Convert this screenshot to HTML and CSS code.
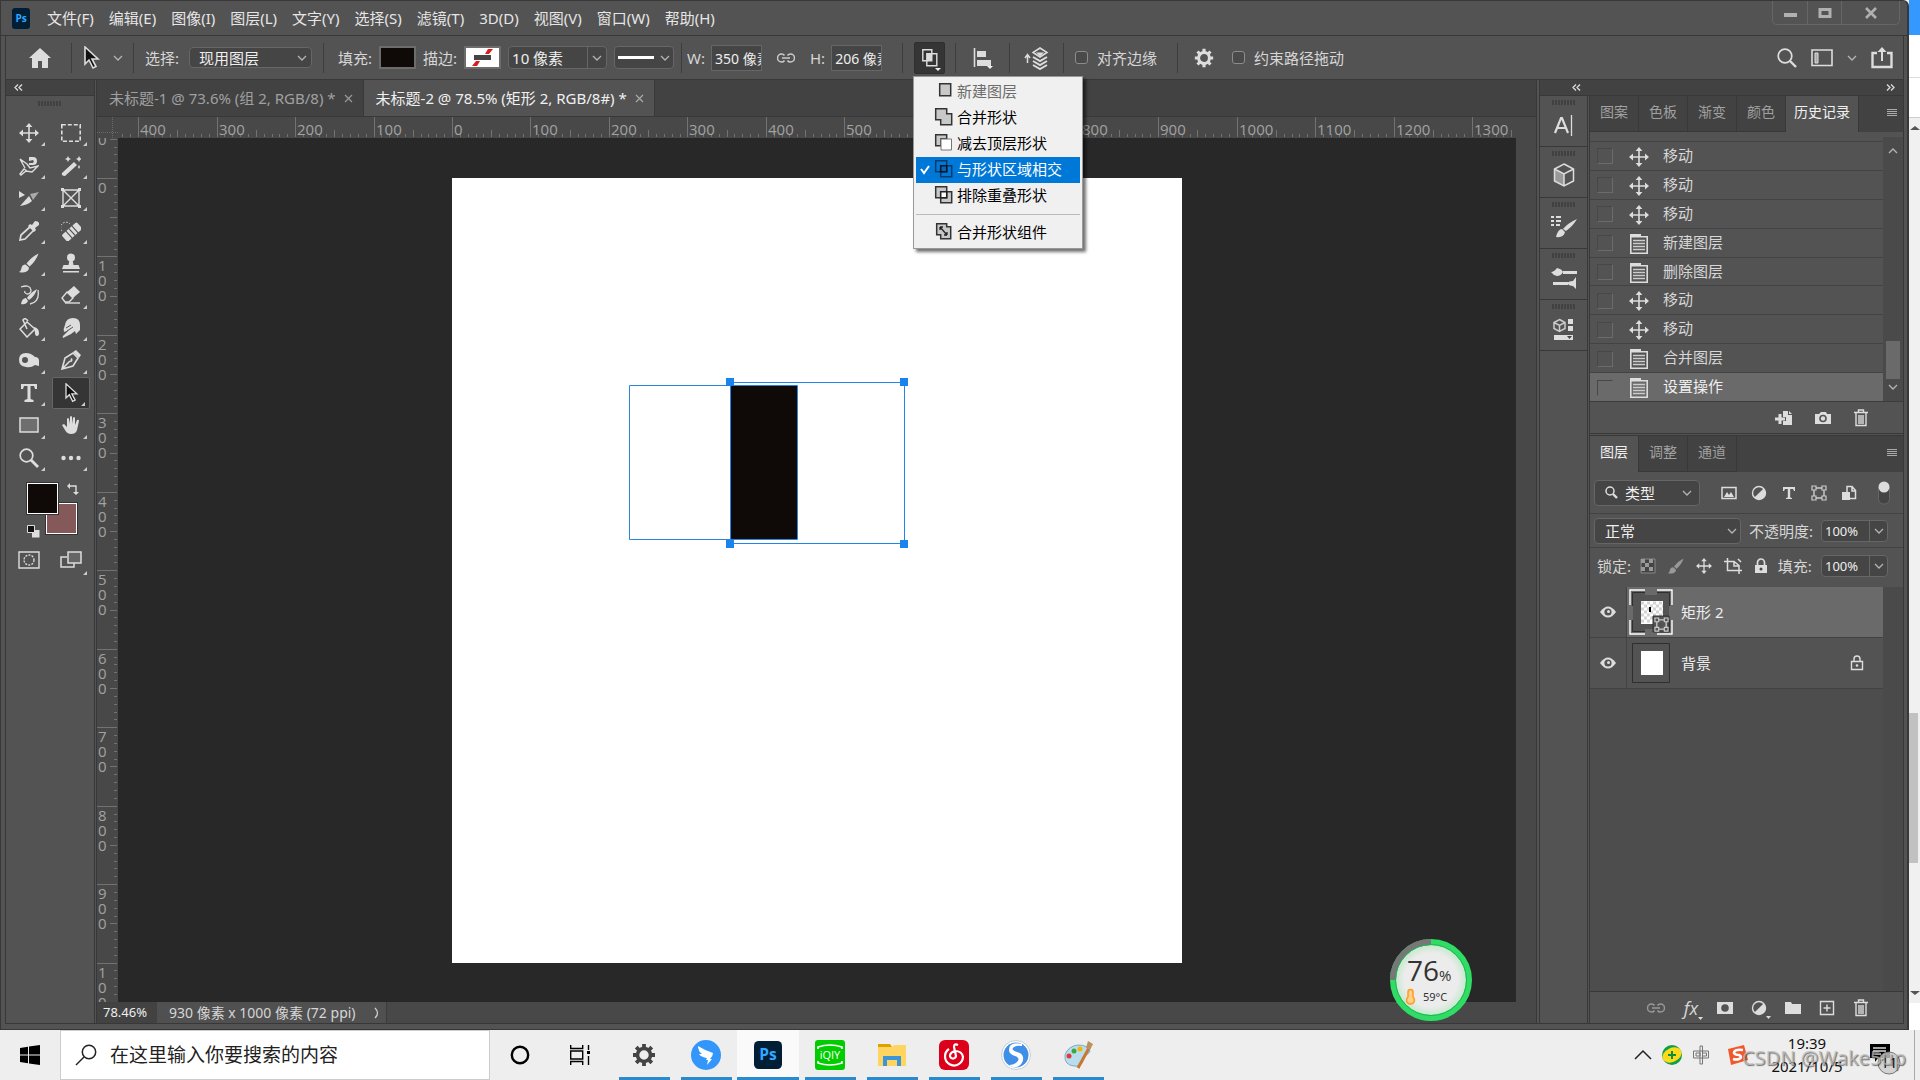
FILE: index.html
```html
<!DOCTYPE html>
<html lang="zh-CN">
<head>
<meta charset="utf-8">
<title>未标题-2 @ 78.5% (矩形 2, RGB/8#)</title>
<link rel="stylesheet" href="styles.css">
</head>
<body>
<svg class="defs" aria-hidden="true">
  <defs>
    <symbol id="chev" viewBox="0 0 10 10"><path d="M1 3l4 4 4-4" fill="none" stroke="#b4b4b4" stroke-width="1.3"/></symbol>
    <symbol id="move" viewBox="0 0 20 20"><path d="M10 3v14M3 10h14" stroke="#ddd" stroke-width="1.6"/><path d="M10 0l3.4 4H6.600zM10 20l3.400-4H6.600zM0 10l4-3.400v6.800zM20 10l-4-3.400v6.800z" fill="#ddd"/></symbol>
    <symbol id="doc" viewBox="0 0 20 20"><path d="M1 0h11v3H1z" fill="#ddd"/><path d="M1.800 2.800h16.400v16.400H1.800z" fill="none" stroke="#ddd" stroke-width="1.600"/><path d="M4 6.500h12M4 9.500h12M4 12.500h12M4 15.500h12" stroke="#ccc" stroke-width="1.300"/></symbol>
    <symbol id="trash" viewBox="0 0 16 18"><path d="M1 3.500h14M5.500 3V1h5v2M3 4v12.500h10V4M6 6v9M8 6v9M10 6v9" fill="none" stroke="#ddd" stroke-width="1.400"/></symbol>
    <symbol id="eye" viewBox="0 0 16 12"><path d="M0 6q8-11 16 0q-8 11-16 0z" fill="#ddd"/><circle cx="8" cy="6" r="3.600" fill="#535353"/><circle cx="8.500" cy="5.500" r="1.500" fill="#ddd"/></symbol>
    <symbol id="shape" viewBox="0 0 16 16"><path d="M3 3h10v10H3z" fill="none" stroke="#ccc" stroke-width="1.400"/><path d="M1 1h4v4H1zM11 1h4v4h-4zM1 11h4v4H1zM11 11h4v4h-4z" fill="#535353" stroke="#ccc" stroke-width="1.200"/></symbol>
    <symbol id="half" viewBox="0 0 16 16"><circle cx="8" cy="8" r="6.500" fill="#535353" stroke="#ddd" stroke-width="1.400"/><path d="M12.600 3.400A6.500 6.500 0 0 1 3.400 12.600z" fill="#ddd"/></symbol>
    <symbol id="gear" viewBox="0 0 24 24"><circle cx="12" cy="12" r="6.500" fill="none" stroke="currentColor" stroke-width="3.600"/><path d="M12 1v4M12 19v4M1 12h4M19 12h4M4.200 4.200l3 3M16.800 16.800l3 3M4.200 19.800l3-3M16.800 7.200l3-3" stroke="currentColor" stroke-width="3.800"/></symbol>
    <symbol id="burger" viewBox="0 0 10 8"><path d="M0 .5h10M0 2.500h10M0 4.500h10M0 6.500h10" stroke="#aaa"/></symbol>
    <symbol id="link" viewBox="0 0 18 10"><path d="M7.500 2.500Q6.500 1 4.500 1a4 4 0 0 0 0 8q2 0 3-1.500M10.500 2.500Q11.500 1 13.500 1a4 4 0 0 1 0 8q-2 0-3-1.500M5 5h8" fill="none" stroke="currentColor" stroke-width="1.500"/></symbol>
    <symbol id="pointer" viewBox="0 0 20 24"><path d="M4 1v17l4-4 4 8 3-1.500-4-7.500h6z" fill="#111" stroke="#ddd" stroke-width="1.600"/></symbol>
    <symbol id="brush" viewBox="0 0 20 20"><path d="M19.500.500Q13 3.500 7.500 10.500l3 3Q17 8 19.500.500zM6.500 11.500q-3.500 0-4 3.500-.500 3-2.500 4 6 1.500 9-1.500 1.500-2 .500-3.500z" fill="currentColor"/></symbol>
    <symbol id="grip" viewBox="0 0 24 5"><path d="M1 0v5M4 0v5M7 0v5M10 0v5M13 0v5M16 0v5M19 0v5M22 0v5" stroke="#3c3c3c" stroke-width="1.500"/></symbol>
  </defs>
</svg>

<main class="window">
  <header class="titlebar">
    <svg class="ps-logo" viewBox="0 0 18 21"><rect width="18" height="21" rx="3" fill="#001e36"/><text x="9" y="14" text-anchor="middle" class="ps-text">Ps</text></svg>
    <nav class="menus">
      <a href="#">文件(F)</a><a href="#">编辑(E)</a><a href="#">图像(I)</a><a href="#">图层(L)</a><a href="#">文字(Y)</a><a href="#">选择(S)</a><a href="#">滤镜(T)</a><a href="#">3D(D)</a><a href="#">视图(V)</a><a href="#">窗口(W)</a><a href="#">帮助(H)</a>
    </nav>
    <div class="win-controls">
      <button aria-label="最小化"><svg width="14" height="12"><path d="M1 6h13v4H1z" fill="#b0b0b0"/></svg></button>
      <button aria-label="最大化"><svg width="14" height="12"><path d="M2 2.500h10v7H2z" fill="none" stroke="#b0b0b0" stroke-width="3"/></svg></button>
      <button class="close" aria-label="关闭"><svg width="14" height="12"><path d="M2 1l10 10M12 1L2 11" stroke="#b0b0b0" stroke-width="2.600"/></svg></button>
    </div>
  </header>

  <section class="options">
    <div class="og og-home"><button class="ic" aria-label="主页"><svg width="22" height="20"><path d="M11 0l11 10h-3v10h-6v-7H9v7H3V10H0z" fill="#ddd"/></svg></button></div>
    <div class="og og-tool"><svg width="20" height="24"><use href="#pointer"/></svg><svg width="10" height="10"><use href="#chev"/></svg></div>
    <div class="og og-select"><label for="sel">选择:</label><span class="drop sel-layer"><select id="sel"><option>现用图层</option></select><svg width="10" height="10"><use href="#chev"/></svg></span></div>
    <div class="og og-fill">
      <span>填充:</span><button class="swatch black" aria-label="填充颜色"></button>
      <span>描边:</span><button class="swatch none" aria-label="描边颜色"><svg width="33" height="19"><path d="M6 18h5l3-5h-4zM19 6h4l4-5h-5z" fill="#d81e1e"/><path d="M8 7h17v5H8z" fill="#444"/></svg></button>
      <span class="drop width-field"><input aria-label="描边宽度" value="10 像素"><i></i><svg width="10" height="10"><use href="#chev"/></svg></span>
      <button class="drop line-style" aria-label="描边样式"><b></b><svg width="10" height="10"><use href="#chev"/></svg></button>
    </div>
    <div class="og og-size">
      <label for="w">W:</label><input id="w" class="num" value="350 像素">
      <svg class="lk" width="18" height="10"><use href="#link"/></svg>
      <label for="h">H:</label><input id="h" class="num" value="206 像素">
    </div>
    <div class="og og-op"><button class="ic pressed" aria-label="路径操作"><svg width="24" height="26"><path d="M4.800 4.800h9v11h-9z" fill="none" stroke="#ddd" stroke-width="1.400"/><path d="M8.800 8.800h10v12h-10z" fill="none" stroke="#ddd" stroke-width="1.400"/><path d="M9 9h5v7H9z" fill="#ddd"/><path d="M17 23h6l-3 3z" fill="#eee"/></svg></button></div>
    <div class="og og-align"><svg width="20" height="22"><path d="M1.500 1v19" stroke="#ddd" stroke-width="1.600"/><path d="M4 4h9v6H4zM4 13h14v6H4z" fill="#ddd"/><path d="M14 19h6l-3 3z" fill="#eee"/></svg></div>
    <div class="og og-arr"><svg width="26" height="24"><path d="M16 2l7 4.500-7 4.500-7-4.500z" fill="#535353" stroke="#ddd" stroke-width="1.500"/><path d="M12 6.500h8l-4 4z" fill="#ddd"/><path d="M9 11l7 4 7-4M9 15l7 4 7-4M9 19l7 4 7-4" fill="none" stroke="#ddd" stroke-width="2"/><path d="M3.500 17V9M1 12l2.500-3.500L6 12" fill="none" stroke="#ddd" stroke-width="1.500"/></svg></div>
    <div class="og og-edge"><input type="checkbox" id="edge"><label for="edge">对齐边缘</label></div>
    <div class="og og-last"><svg class="gear" width="20" height="20"><use href="#gear"/></svg><input type="checkbox" id="cons"><label for="cons">约束路径拖动</label></div>
    <div class="og og-right">
      <svg width="20" height="20"><circle cx="8" cy="8" r="6.800" fill="none" stroke="#ddd" stroke-width="1.700"/><path d="M13 13l6 6" stroke="#ddd" stroke-width="2.400"/></svg>
      <svg width="22" height="18"><path d="M1 1h20v15.500H1z" fill="none" stroke="#ddd" stroke-width="1.600"/><path d="M4 4h3v10H4z" fill="#aaa" stroke="#ddd"/></svg>
      <svg width="10" height="10"><use href="#chev"/></svg>
      <svg width="22" height="22"><path d="M6 6H1.500v14h19V6H16" fill="none" stroke="#ddd" stroke-width="2.400"/><path d="M11 14V3" stroke="#ddd" stroke-width="2"/><path d="M11 0l4.500 5h-9z" fill="#ddd"/></svg>
    </div>
  </section>

  <div class="workspace">
    <aside class="toolbox">
      <div class="dock-head"><svg width="9" height="7"><path d="M4 .5l-3 3 3 3M8 .5l-3 3 3 3" fill="none" stroke="#ddd" stroke-width="1.300"/></svg></div>
      <div class="grip-row"><svg width="24" height="5"><use href="#grip"/></svg></div>
      <div class="tools">
        <button aria-label="移动工具"><svg><use href="#move"/></svg></button>
        <button aria-label="矩形选框"><svg viewBox="0 0 20 20"><path d="M.800 1.800h18.400v16.400H.800z" fill="none" stroke="#ddd" stroke-width="1.600" stroke-dasharray="4 2"/></svg></button>
        <button aria-label="磁性套索"><svg viewBox="0 0 20 20"><path d="M1 3l7 5 3 4 8-2-6 6-6-1-5 4-1-1 4-5 3 2M1 3l5 9" fill="none" stroke="#ddd" stroke-width="1.400"/><path d="M10 5V1h4a4 4 0 0 1 0 8h-4V7h4a2 2 0 0 0 0-3z" fill="#ddd"/></svg></button>
        <button aria-label="魔棒"><svg viewBox="0 0 20 20"><path d="M1 17L13 6l3 3L4 20q-4 0-3-3zM7 0l1 2 2 1-2 1-1 2-1-2-2-1 2-1zM18 0l1 2 2 1-2 1-1 2-1-2-2-1 2-1zM18 9l1 2-1 2-1-2z" fill="#ddd"/></svg></button>
        <button aria-label="切片"><svg viewBox="0 0 20 20"><path d="M0 3l6 4-6 3z" fill="#ddd"/><path d="M1 18L10 8l3 5q-4 4-12 5z" fill="#ddd"/><path d="M11 6l9-2-6 8z" fill="#aaa"/></svg></button>
        <button aria-label="图框"><svg viewBox="0 0 20 20"><path d="M2 2h16v16H2zM2 2l16 16M18 2L2 18" fill="none" stroke="#ddd" stroke-width="1.400"/><path d="M0 0h3v3H0zM17 0h3v3h-3zM0 17h3v3H0zM17 17h3v3h-3z" fill="#ddd"/></svg></button>
        <button aria-label="吸管"><svg viewBox="0 0 20 20"><path d="M12 5L2 14l-1 5 5-1L15 9" fill="none" stroke="#ddd" stroke-width="1.700"/><path d="M9 5l2-2 2 1 3-4q5 0 4 4l-4 3 1 2-2 2z" fill="#ddd"/></svg></button>
        <button aria-label="修复画笔"><svg viewBox="0 0 20 20"><g transform="rotate(-42 11 11)"><rect x="1" y="6.500" width="20" height="9" rx="1.500" fill="#ddd"/><path d="M7 6v10M11 6v10M15 6v10" stroke="#535353" stroke-width="1.200"/></g><path d="M1 10a5 5 0 0 1 8-7" fill="none" stroke="#ddd" stroke-dasharray="1.500 1.500"/></svg></button>
        <button aria-label="画笔"><svg class="lit"><use href="#brush"/></svg></button>
        <button aria-label="仿制图章"><svg viewBox="0 0 20 20"><circle cx="10" cy="4.500" r="4" fill="#ddd"/><path d="M8.500 7h3l1 5h5l1.500 4H1l1.500-4h5zM2 18h16v1.500H2z" fill="#ddd"/></svg></button>
        <button aria-label="历史画笔"><svg viewBox="0 0 20 20"><path d="M18 4Q11 8 8 13l2 2Q16 11 18 4zM7 13q-4 0-5 6 5 1 7-3z" fill="#ddd"/><path d="M2 2q9-3 10 3 0 4-4 4-3-1-2-3M19 5q2 12-8 14" fill="none" stroke="#ddd" stroke-width="1.300"/></svg></button>
        <button aria-label="橡皮擦"><svg viewBox="0 0 20 20"><path d="M13 1l6 6-7 6-6-6z" fill="#ddd"/><path d="M6 7l6 6-4 4H4l-3-4z" fill="none" stroke="#ddd" stroke-width="1.400"/><path d="M4 18h15" stroke="#ddd" stroke-width="1.400"/></svg></button>
        <button aria-label="油漆桶"><svg viewBox="0 0 20 20"><path d="M8 4l8 7-8 8-7-8zM8 11L4 2q2-3 5 1" fill="none" stroke="#ddd" stroke-width="1.500"/><path d="M15 9q5 1 5 6 0 3-2 3t-2-3z" fill="#ddd"/></svg></button>
        <button aria-label="涂抹"><svg viewBox="0 0 20 20"><path d="M4 7q1-7 8-7 7 0 7 7v5l-4 4-1-3-4 3-8 4q-1-2 1-3l5-5-5 2q-1-3 1-7z" fill="#ddd"/><path d="M5 10l5-3M6 13l6-4" stroke="#535353"/></svg></button>
        <button aria-label="海绵"><svg viewBox="0 0 20 20"><path d="M0 10q0-7 7-7 5 0 9 4 4 0 4 4v5l-4-1q-4 3-9 2-7-1-7-7z" fill="#ddd"/><circle cx="6" cy="10" r="3" fill="#535353"/></svg></button>
        <button aria-label="钢笔"><svg viewBox="0 0 20 20"><path d="M1 19L4 8l8-5 5 5-5 8zM1 19l8-8" fill="none" stroke="#ddd" stroke-width="1.600"/><path d="M12 2l3-2 5 5-2 3zM10 8a2 2 0 1 1-1 4z" fill="#ddd"/></svg></button>
        <button aria-label="文字"><svg viewBox="0 0 20 20"><path d="M2 1h16v5h-2l-1-3h-3.500v13l3 1v2h-9v-2l3-1V3H5L4 6H2z" fill="#ddd"/></svg></button>
        <button class="active" aria-label="路径选择"><svg viewBox="0 0 20 24"><use href="#pointer"/></svg></button>
        <button aria-label="矩形"><svg viewBox="0 0 20 20"><path d="M1 3h18v14H1z" fill="#6e6e6e" stroke="#ddd" stroke-width="1.500"/></svg></button>
        <button aria-label="抓手"><svg viewBox="0 0 20 20"><path d="M1 10l2-1 3 3V4q1-2 2 0l1 5V2q1-2 2 0v7l1-6q1-2 2 0v7l2-5q2-1 2 1l-2 9q-1 4-6 4-4 0-6-4z" fill="#ddd"/></svg></button>
        <button aria-label="缩放"><svg viewBox="0 0 20 20"><circle cx="7.500" cy="7.500" r="6.300" fill="none" stroke="#ddd" stroke-width="1.700"/><path d="M12 12l7 7" stroke="#ddd" stroke-width="2.800"/></svg></button>
        <button aria-label="更多"><svg viewBox="0 0 20 20"><circle cx="2.500" cy="10" r="2.200" fill="#ddd"/><circle cx="10" cy="10" r="2.200" fill="#ddd"/><circle cx="17.500" cy="10" r="2.200" fill="#ddd"/></svg></button>
      </div>
      <div class="colors">
        <button class="bg" aria-label="背景色"></button><button class="fg" aria-label="前景色"></button>
        <svg class="swap" width="12" height="12"><path d="M2 3h7v7" fill="none" stroke="#ddd" stroke-width="1.400"/><path d="M3 0v6L0 3zM6 9h6l-3 3z" fill="#ddd"/></svg>
        <svg class="deflt" width="13" height="13"><path d="M5 5h7.500v7.500H5z" fill="#ddd"/><path d="M.500.500h7v7h-7z" fill="#111" stroke="#ddd"/></svg>
      </div>
      <div class="tools modes">
        <button class="plain" aria-label="快速蒙版"><svg viewBox="0 0 22 18"><path d="M1 1h20v16H1z" fill="none" stroke="#ddd" stroke-width="1.400"/><circle cx="11" cy="9" r="5" fill="none" stroke="#ddd" stroke-width="1.300" stroke-dasharray="2 1.200"/></svg></button>
        <button aria-label="屏幕模式"><svg viewBox="0 0 22 18"><path d="M7 6H1v10h13v-4" fill="none" stroke="#ddd" stroke-width="1.500"/><path d="M8 1h13v11H8z" fill="#666" stroke="#ddd" stroke-width="1.500"/></svg></button>
      </div>
    </aside>

    <section class="document">
      <div class="doctabs">
        <a href="#" class="doctab">未标题-1 @ 73.6% (组 2, RGB/8) * <svg width="9" height="9"><path d="M1 1l7 7M8 1L1 8" stroke="#999" stroke-width="1.200"/></svg></a>
        <a href="#" class="doctab on">未标题-2 @ 78.5% (矩形 2, RGB/8#) * <svg width="9" height="9"><path d="M1 1l7 7M8 1L1 8" stroke="#aaa" stroke-width="1.200"/></svg></a>
      </div>
      <div class="view">
        <svg class="corner"><path d="M15.500 0v21M0 15.500h21" stroke="#6a6a6a" stroke-dasharray="1 1"/></svg>
        <svg class="ruler" id="ruler-h"></svg>
        <div class="view-end"></div>
        <svg class="ruler" id="ruler-v"></svg>
        <div class="canvas">
          <svg class="page" viewBox="0 0 730 785">
            <path d="M0 0h730v785H0z" fill="#fff"/>
            <path d="M279 208h66v153h-66z" fill="#0f0a07"/>
            <path d="M177.500 207.500h168v154h-168z" fill="none" stroke="#2a84e0"/>
            <path d="M278.500 204.500h174v161h-174z" fill="none" stroke="#1f86ee"/>
            <path d="M274 200h8v8h-8zM448 200h8v8h-8zM274 362h8v8h-8zM448 362h8v8h-8z" fill="#1a84ee"/>
          </svg>
        </div>
        <div class="vscroll"></div>
      </div>
      <footer class="status"><span class="zoom">78.46%</span><span class="info">930 像素 x 1000 像素 (72 ppi)<svg width="6" height="12"><path d="M1 1q5 5 0 10" fill="none" stroke="#ccc" stroke-width="1.300"/></svg></span></footer>
    </section>

    <div class="docks">
      <div class="docks-head">
        <svg width="9" height="7"><path d="M4 .5l-3 3 3 3M8 .5l-3 3 3 3" fill="none" stroke="#ddd" stroke-width="1.300"/></svg>
        <svg width="9" height="7"><path d="M1 .5l3 3-3 3M5 .5l3 3-3 3" fill="none" stroke="#ddd" stroke-width="1.300"/></svg>
      </div>
      <aside class="icon-dock">
        <button aria-label="字符"><svg class="g" width="24" height="5"><use href="#grip"/></svg><svg width="22" height="22"><path d="M2 19L8 4h1l6 15M4 14h9" fill="none" stroke="#ddd" stroke-width="2.200"/><path d="M18.500 1v21" stroke="#ddd" stroke-width="1.300"/></svg></button>
        <button aria-label="3D"><svg class="g" width="24" height="5"><use href="#grip"/></svg><svg width="22" height="24"><path d="M1.500 6.500L11 11v11.500l-9.500-5z" fill="#999"/><path d="M11 1l9.500 5v12L11 23l-9.500-5V6zM1.500 6l9.500 5 9.500-5M11 11v12" fill="none" stroke="#ddd" stroke-width="1.500"/></svg></button>
        <button aria-label="画笔设置"><svg class="g" width="24" height="5"><use href="#grip"/></svg><svg width="26" height="24"><path d="M0 3h3M5 3h5M0 7h3M5 7h5M0 11h3M5 11h4" stroke="#ddd" stroke-width="1.800"/><path d="M26 5Q17 9 12 15l3 2Q22 12 26 5zM11 15q-4 0-6 8 8 1 9-5z" fill="#ddd"/></svg></button>
        <button aria-label="画笔"><svg class="g" width="24" height="5"><use href="#grip"/></svg><svg width="26" height="22"><path d="M0 5q3 0 6-4 5 1 6 4-2 4-6 4-4-1-6-4zM12 4h14v3H12zM2 15h15v3H2zM16 16q2-2 6-2l3-4v12l-3-3q-4 0-6-3z" fill="#ddd"/></svg></button>
        <button aria-label="库"><svg class="g" width="24" height="5"><use href="#grip"/></svg><svg width="22" height="22"><path d="M6.500 1.500l5.500 3v6l-5.500 3-5.500-3v-6zM1 4.500l5.500 3 5.500-3M6.500 7.500v6" fill="none" stroke="#ccc" stroke-width="1.500"/><path d="M15 1h5v5h-5zM15 8h5v5h-5zM1 17h19v5H1z" fill="#ddd"/><path d="M14 18h5l-2.500 3z" fill="#444"/></svg></button>
      </aside>
      <div class="panels">
        <section class="panel">
          <nav class="ptabs"><a href="#">图案</a><a href="#">色板</a><a href="#">渐变</a><a href="#">颜色</a><a href="#" class="on">历史记录</a><svg width="10" height="8"><use href="#burger"/></svg></nav>
          <div class="history">
            <ol>
              <li><i></i><svg><use href="#move"/></svg>移动</li>
              <li><i></i><svg><use href="#move"/></svg>移动</li>
              <li><i></i><svg><use href="#move"/></svg>移动</li>
              <li><i></i><svg><use href="#doc"/></svg>新建图层</li>
              <li><i></i><svg><use href="#doc"/></svg>删除图层</li>
              <li><i></i><svg><use href="#move"/></svg>移动</li>
              <li><i></i><svg><use href="#move"/></svg>移动</li>
              <li><i></i><svg><use href="#doc"/></svg>合并图层</li>
              <li class="on"><i></i><svg><use href="#doc"/></svg>设置操作</li>
            </ol>
            <div class="hscroll"><svg class="up" width="10" height="10"><use href="#chev"/></svg><b></b><svg width="10" height="10"><use href="#chev"/></svg></div>
          </div>
          <footer class="hfoot">
            <svg width="18" height="16"><path d="M8 1h5v4h4v10H8v-4h3V7H8z" fill="#ddd"/><path d="M14 1l3 3h-3z" fill="#ddd"/><path d="M5 4v10M0 9h10" stroke="#ddd" stroke-width="3"/></svg>
            <svg width="16" height="14"><path d="M0 3h4l2-2h5l1 2h4v10H0z" fill="#ddd"/><circle cx="8" cy="7.500" r="3" fill="#ddd" stroke="#535353" stroke-width="1.600"/></svg>
            <svg width="16" height="18"><use href="#trash"/></svg>
          </footer>
        </section>
        <section class="panel layers">
          <nav class="ptabs"><a href="#" class="on">图层</a><a href="#">调整</a><a href="#">通道</a><svg width="10" height="8"><use href="#burger"/></svg></nav>
          <div class="lrow filter">
            <span class="drop kind"><svg width="13" height="13"><circle cx="5" cy="5" r="4" fill="none" stroke="#ddd" stroke-width="1.500"/><path d="M8 8l4 4" stroke="#ddd" stroke-width="2.400"/></svg><select aria-label="过滤类型"><option>类型</option></select><svg width="10" height="10"><use href="#chev"/></svg></span>
            <svg width="16" height="16"><path d="M1 2.500h14v11H1z" fill="none" stroke="#ddd" stroke-width="1.500"/><path d="M3 12l3-5 2 3 2-3 3 5z" fill="#ddd"/></svg>
            <svg width="16" height="16"><use href="#half"/></svg>
            <svg width="16" height="16"><path d="M2 2h12v4h-1l-1-2H9.200v8.500l1.800.500v1H5v-1l1.800-.500V4H4L3 6H2z" fill="#ddd"/></svg>
            <svg width="16" height="16"><use href="#shape"/></svg>
            <svg width="16" height="16"><path d="M6 8V1.500h5l3.500 4v8H9M11 1v5h4" fill="none" stroke="#ddd" stroke-width="1.500"/><path d="M1 7h8v8H1z" fill="#ddd"/></svg>
            <svg class="toggle" width="12" height="24"><rect x=".5" y="3" width="11" height="20" rx="5" fill="#444" stroke="#666"/><circle cx="6" cy="6" r="5.500" fill="#ddd"/></svg>
          </div>
          <div class="lrow blend">
            <span class="drop mode"><select aria-label="混合模式"><option>正常</option></select><svg width="10" height="10"><use href="#chev"/></svg></span>
            <label for="op">不透明度:</label>
            <span class="drop pct"><input id="op" value="100%"><i></i><svg width="10" height="10"><use href="#chev"/></svg></span>
          </div>
          <div class="lrow lock">
            <span>锁定:</span>
            <div class="lock-ics">
              <svg width="16" height="16"><path d="M1 1h14v14H1z" fill="#444" stroke="#888"/><path d="M1 1h4v4H1zM9 1h4v4H9zM5 5h4v4H5zM1 9h4v4H1zM9 9h4v4H9z" fill="#999"/></svg>
              <svg class="dim" width="16" height="16"><use href="#brush"/></svg>
              <svg width="16" height="16"><use href="#move"/></svg>
              <svg width="18" height="16"><path d="M3.500 0v12.500H18M0 3.500h10l5 4V16M14 1l3 3M10 3v5h5" fill="none" stroke="#ddd" stroke-width="1.500"/></svg>
              <svg width="14" height="16"><path d="M1 7h12v8H1z" fill="#ddd"/><path d="M3.500 7V4.500a3.500 3.500 0 0 1 7 0V7" fill="none" stroke="#ddd" stroke-width="1.700"/><circle cx="7" cy="11" r="1.500" fill="#444"/></svg>
            </div>
            <label for="fl">填充:</label>
            <span class="drop pct"><input id="fl" value="100%"><i></i><svg width="10" height="10"><use href="#chev"/></svg></span>
          </div>
          <div class="layer-list">
            <div class="layer on">
              <button class="vis" aria-label="可见性"><svg width="16" height="12"><use href="#eye"/></svg></button>
              <div class="linfo">
                <svg class="thumb" width="44" height="46"><path d="M3.500 3.500h37v39h-37z" fill="#535353" stroke="#2e2e2e"/><path d="M16 0h12v6H16zM16 40h12v6H16zM0 17h4v14H0zM40 17h4v14h-4z" fill="#6a6a6a"/><path d="M1 16V1h15M28 1h15v15M1 31v14h15M43 31v14H28" fill="none" stroke="#fff" stroke-width="1.400"/><path d="M12 12h22v23H12z" fill="#fff"/><path d="M12 14h22M12 20h22M12 26h22M12 32h22" stroke="#d4d4d4" stroke-width="3" stroke-dasharray="3 3"/><path d="M15 17h19M15 23h19M15 29h19" stroke="#d4d4d4" stroke-width="3" stroke-dasharray="3 3"/><path d="M20 18h2v5h-2z" fill="#000"/><path d="M24 27h16v16H24z" fill="#535353" stroke="#333"/><svg x="25" y="28" width="15" height="15"><use href="#shape"/></svg></svg>
                <span>矩形 2</span>
              </div>
            </div>
            <div class="layer">
              <button class="vis" aria-label="可见性"><svg width="16" height="12"><use href="#eye"/></svg></button>
              <div class="linfo">
                <svg class="thumb" width="44" height="46"><path d="M3.500 3.500h37v39h-37z" fill="#535353" stroke="#2e2e2e"/><path d="M12 11h22v24H12z" fill="#fff"/></svg>
                <span>背景</span>
                <svg class="padlock" width="14" height="16"><path d="M1.500 6.500h11v8h-11zM4 6V4a3 3 0 0 1 6 0v2" fill="none" stroke="#ddd" stroke-width="1.400"/><circle cx="7" cy="10.500" r="1.300" fill="#ddd"/></svg>
              </div>
            </div>
          </div>
          <footer class="lfoot">
            <svg class="dim" width="18" height="10"><use href="#link"/></svg>
            <button class="fx" aria-label="图层样式">fx<svg width="5" height="3"><path d="M0 0h5L2.500 3z" fill="#ddd"/></svg></button>
            <svg width="16" height="14"><path d="M0 1h16v12H0z" fill="#ddd"/><circle cx="8" cy="7" r="3.800" fill="#535353"/></svg>
            <button class="adj" aria-label="调整图层"><svg width="16" height="16"><use href="#half"/></svg><svg width="5" height="3"><path d="M0 0h5L2.500 3z" fill="#ddd"/></svg></button>
            <svg width="16" height="14"><path d="M0 1h6l1 2h9v10H0z" fill="#ddd"/></svg>
            <svg width="16" height="16"><path d="M1.500 1.500h13v13h-13zM8 4.500v7M4.500 8h7" fill="none" stroke="#ddd" stroke-width="1.400"/></svg>
            <svg width="16" height="18"><use href="#trash"/></svg>
          </footer>
        </section>
      </div>
    </div>
  </div>

  <menu class="popup">
    <li class="off"><svg width="20" height="20"><path d="M5.700 2.700h11v12h-11z" fill="#c8c8c8" stroke="#333" stroke-width="1.500"/></svg>新建图层</li>
    <li><svg width="20" height="20"><path d="M1.700 1.700h11v5h5v11h-11v-5h-5z" fill="#c8c8c8" stroke="#333" stroke-width="1.500"/></svg>合并形状</li>
    <li><svg width="20" height="20"><path d="M1.700 1.700h11v4H7v7H1.700z" fill="#c8c8c8" stroke="#333" stroke-width="1.500"/><path d="M7 6h10.500v11H7z" fill="#fff" stroke="#777"/></svg>减去顶层形状</li>
    <li class="hot"><svg class="tick" width="10" height="10"><path d="M1 4l3 4 5-7" fill="none" stroke="#fff" stroke-width="2"/></svg><svg width="20" height="20"><path d="M1.700 1.700h11v11h-11zM6.700 6.700h11v11h-11z" fill="none" stroke="#083a68" stroke-width="1.500"/><path d="M6.700 6.700h6v6h-6z" fill="#0b64b8" stroke="#06182b" stroke-width="1.500"/></svg>与形状区域相交</li>
    <li><svg width="20" height="20"><path d="M1.700 1.700h11v11h-11zM6.700 6.700h11v11h-11z" fill="#c8c8c8" stroke="#333" stroke-width="1.500"/><path d="M6.700 6.700h6v6h-6z" fill="#fff" stroke="#222" stroke-width="1.500"/></svg>排除重叠形状</li>
    <li class="sep"></li>
    <li><svg width="20" height="20"><path d="M2.700 1.700h10v3h4v12h-10v-4h-4z" fill="#c8c8c8" stroke="#333" stroke-width="1.500"/><path d="M6 5l7 8M6 5v3M6 5h3M13 13v-3M13 13h-3" stroke="#222" stroke-width="1.300"/></svg>合并形状组件</li>
  </menu>
</main>

<div class="behind"><div class="b-top"></div><div class="b-white"></div><div class="b-scroll"><svg width="11" height="6"><path d="M1 5h10L6 1z" fill="#555"/></svg><b></b><svg width="11" height="6"><path d="M1 1h10L6 5z" fill="#555"/></svg></div><div class="b-foot"></div></div>

<footer class="taskbar">
  <button class="start" aria-label="开始"><svg width="20" height="20"><path d="M0 3l8-1.200V9.500H0zM9 1.600L20 0v9.500H9zM0 10.500h8v7.700L0 17zM9 10.500h11V20L9 18.400z" fill="#000"/></svg></button>
  <label class="search"><svg width="22" height="22"><circle cx="14" cy="8" r="6.700" fill="none" stroke="#222" stroke-width="1.500"/><path d="M9 13l-8 8" stroke="#222" stroke-width="1.500"/></svg><input placeholder="在这里输入你要搜索的内容" aria-label="搜索"></label>
  <button class="sys" aria-label="Cortana"><svg width="20" height="20"><circle cx="10" cy="10" r="8.200" fill="none" stroke="#000" stroke-width="2.400"/></svg></button>
  <button class="sys" aria-label="任务视图"><svg width="22" height="20"><path d="M1.700 0v3.500h12V0M1.700 6h12v8h-12zM1.700 20v-3.500h12V20M19.500 0v5M19.500 11v9" fill="none" stroke="#000" stroke-width="1.400"/><path d="M18 6h3v3h-3z"/></svg></button>
  <div class="apps">
    <button class="set" aria-label="设置"><svg width="24" height="24"><use href="#gear"/></svg></button>
    <button aria-label="钉钉"><svg width="30" height="30"><circle cx="15" cy="15" r="15" fill="#3296fa"/><path d="M7 6q8 5 15 7 0 3-3 6h2l-5 6 1-5h-2l1-2q-6-1-8-4h3q-4-3-4-8z" fill="#fff"/></svg></button>
    <button class="cur" aria-label="Photoshop"><svg width="28" height="28" viewBox="0 0 18 18"><rect width="18" height="18" rx="3" fill="#001e36"/><text x="9" y="12" text-anchor="middle" class="ps-text">Ps</text></svg></button>
    <button aria-label="爱奇艺"><svg width="30" height="30"><rect width="30" height="30" rx="3" fill="#00cc00"/><path d="M3 9V7q12-4 24 0v2M3 21v2q12 4 24 0v-2" fill="none" stroke="#fff" stroke-width="1.700"/><text x="15" y="19" text-anchor="middle" class="qiy">iQIY</text></svg></button>
    <button aria-label="文件资源管理器"><svg width="28" height="26"><path d="M0 2h12l2 3H0z" fill="#e0a000"/><path d="M0 5h14l2-2h12v21H0z" fill="#ffd460"/><path d="M5 24V14h18v10h-4v-6H9v6z" fill="#3d94d6"/></svg></button>
    <button aria-label="网易云音乐"><svg width="30" height="30"><rect width="30" height="30" rx="6" fill="#dd001b"/><path d="M19 5q-4-2-4 2l2 9a3 3 0 1 1-6-1q1-3 5-4 7 0 8 6a9 9 0 1 1-14-8" fill="none" stroke="#fff" stroke-width="2.200"/></svg></button>
    <button aria-label="搜狗浏览器"><svg width="30" height="30"><circle cx="15" cy="15" r="14.500" fill="#fff" stroke="#ccc"/><circle cx="15" cy="15" r="12.500" fill="#3f8ee8"/><path d="M21 4Q8 1 8 10q0 4 6 6 6 2 2 6-3 3-8 3 5 4 10 1 5-4 4-9-1-4-6-5-7-2-3-5 3-2 8-1z" fill="#fff"/></svg></button>
    <button aria-label="画图"><svg width="30" height="30"><path d="M2 15Q5 6 15 5q10 0 12 6-1 3-4 4-5 2-3 6-2 6-9 5Q1 25 2 15z" fill="#b9dcef" stroke="#7aa9c8"/><circle cx="6" cy="16" r="2.500" fill="#e03c31"/><circle cx="11" cy="11" r="2.500" fill="#3aaa35"/><circle cx="17" cy="9" r="2.500" fill="#f5b400"/><path d="M26 8L15 28" stroke="#c8772c" stroke-width="3"/><path d="M23 8l2-7 5 3-3 6z" fill="#b9925c"/></svg></button>
  </div>
  <div class="tray">
    <svg width="18" height="18"><path d="M1 13l8-8 8 8" fill="none" stroke="#222" stroke-width="1.500"/></svg>
    <svg width="20" height="20"><circle cx="10" cy="10" r="10" fill="#0ba04a"/><ellipse cx="10" cy="10" rx="10" ry="7" transform="rotate(-25 10 10)" fill="#ffd91c"/><path d="M10 6v8M6 10h8" stroke="#0b8f3f" stroke-width="2"/></svg>
    <svg width="18" height="20"><path d="M1.500 6h15v7h-15zM4 8h4v3H4zM10.500 8h4v3h-4zM8 1h2.500v18H8z" fill="#eee" stroke="#777"/></svg>
    <svg class="sg" width="20" height="20"><path d="M0 4l16-4 4 15-17 5z" fill="#f0592b"/><path d="M15 5Q6 4 6 8q1 2 5 2 4 2 0 4-3 1-6 0" fill="none" stroke="#fff" stroke-width="2.600"/></svg>
    <time class="clock">19:39<br>2021/10/5</time>
    <svg class="note" width="34" height="34"><path d="M1 3h20v14H9l-3 4v-4H1z" fill="#000"/><path d="M4 7h13M4 10h13M4 13h8" stroke="#ddd" stroke-width="1.300"/><circle cx="20" cy="22" r="11" fill="#ccc" fill-opacity=".8" stroke="#777"/><text x="20" y="27" text-anchor="middle" class="cnt">11</text></svg>
  </div>
  <span class="mark">CSDN @Wake5up</span>
</footer>

<div class="gauge">
  <svg viewBox="0 0 84 84"><defs><radialGradient id="gg"><stop offset=".7" stop-color="#ececec"/><stop offset="1" stop-color="#b9e8c4"/></radialGradient></defs><circle cx="42" cy="42" r="38" fill="url(#gg)" stroke="#2fdc64" stroke-width="6"/><path d="M4 42A38 38 0 0 1 42 4" fill="none" stroke="#777" stroke-width="6"/><circle cx="42" cy="42" r="35.500" fill="none" stroke="#1fb552"/><path d="M19 59v-5a2.500 2.500 0 0 1 5 0v5a4 4 0 1 1-5 0z" fill="#ffd08a" stroke="#ff9a1f" stroke-width="1.500"/></svg>
  <span class="g-num">76<small>%</small></span><span class="g-temp">59°C</span>
</div>
<script src="ruler.js"></script>
</body>
</html>
```
FILE: styles.css
```css
* { box-sizing: border-box; }
body {
  margin: 0; height: 100vh; min-height: 900px; position: relative; overflow: hidden;
  display: grid; grid-template: 1fr 50px / 1fr 11px;
  font: 15px/20px "Noto Sans", "Noto Sans CJK SC", sans-serif; color: #d6d6d6; background: #f0f0f0;
}
button, input, select { font: inherit; color: inherit; margin: 0; padding: 0; border: 0; background: none; outline: 0; min-width: 0; }
select { appearance: none; }
a { color: inherit; text-decoration: none; }
svg { display: block; flex: none; }
.defs { position: absolute; width: 0; height: 0; }
.ps-text { font: bold 10px "Open Sans", sans-serif; fill: #31a8ff; }

.window {
  position: relative; min-width: 0; min-height: 0; display: flex; flex-direction: column;
  background: #535353; border: 1px solid #383838; border-width: 1px 2px 1px 1px; border-top-right-radius: 6px;
}
.titlebar { height: 35px; display: flex; align-items: center; padding-left: 11px; border-bottom: 1px solid #383838; color: #e6e6e6; flex: none; }
.ps-logo { width: 18px; height: 21px; }
.menus { display: flex; gap: 15px; margin-left: 17px; flex: 1; white-space: nowrap; }
.win-controls { display: flex; align-self: flex-start; height: 24px; margin-right: 7px; border: 1px solid #666; border-top: 0; border-radius: 0 0 5px 5px; }
.win-controls button { width: 34px; display: grid; place-items: center; }
.win-controls button + button { border-left: 1px solid #666; }
.win-controls .close { width: 58px; }

.options { height: 44px; display: flex; align-items: center; flex: none; margin: 0 3px 0 4px; border: 1px solid #383838; border-width: 0 1px 1px; white-space: nowrap; }
.og { display: flex; align-items: center; height: 30px; border-left: 1px solid #3d3d3d; flex: none; }
.og:first-child, .og-right { border-left: 0; }
.og-home { width: 65px; justify-content: center; padding-left: 2px; }
.og-tool { width: 62px; gap: 12px; padding-left: 9px; }
.og-select { width: 190px; padding-left: 11px; gap: 10px; }
.og-fill { width: 358px; padding-left: 14px; gap: 7px; }
.og-size { width: 221px; padding-left: 5px; gap: 6px; }
.og-size .lk { margin: 0 9px; color: #ccc; }
.og-op { width: 53px; padding-left: 11px; }
.og-align, .og-arr { width: 54px; justify-content: center; }
.og-edge { width: 114px; padding-left: 11px; gap: 9px; }
.og-last { padding-left: 16px; gap: 9px; }
.og-last .gear { margin-right: 9px; }
.og-right { margin-left: auto; padding-right: 10px; gap: 14px; }
.gear { color: #ddd; }
.ic { display: grid; place-items: center; }
.pressed { width: 31px; height: 32px; background: #353535; border: 1px solid #2e2e2e; border-radius: 2px; }
.drop { display: flex; align-items: center; background: #454545; border: 1px solid #666; border-radius: 4px; color: #eee; }
.drop select, .drop input { flex: 1; width: 0; }
.drop i { width: 1px; align-self: stretch; background: #666; flex: none; }
.sel-layer { width: 123px; height: 21px; padding: 0 4px 0 9px; }
.swatch { width: 37px; height: 23px; border: 2px solid #6c6c6c; padding: 0; flex: none; }
.black { background: #0f0a07; }
.none { background: #fff; }
.width-field { width: 99px; height: 23px; padding: 0 4px 0 3px; flex: none; }
.width-field i, .pct i { margin-right: 4px; }
.line-style { width: 60px; height: 23px; padding: 0 3px; justify-content: space-between; flex: none; }
.line-style b { width: 36px; height: 3px; background: #fff; }
.num { width: 51px; height: 26px; border: 1px solid #666; background: #454545; padding: 0 0 0 3px; color: #eee; font-size: 14px; }
input[type="checkbox"] { appearance: none; width: 13px; height: 13px; border: 1px solid #8c8c8c; border-radius: 3px; background: #4a4a4a; }

.workspace { flex: 1; min-height: 0; display: flex; margin: 0 3px 5px 4px; border: 1px solid #383838; border-top: 0; }
.toolbox { width: 89px; flex: none; border-right: 1px solid #383838; }
.dock-head { height: 16px; background: #424242; border-bottom: 1px solid #383838; padding: 4px 8px; }
.grip-row { height: 21px; display: grid; place-items: start center; padding: 5px 0 0; }
.tools { display: grid; grid-template: repeat(11, 1fr) / 42px 42px; height: 357px; margin-left: 2px; }
.tools button { position: relative; display: grid; place-items: center; border: 1px solid transparent; border-radius: 2px; }
.tools button svg { width: 20px; height: 20px; }
.tools button::after { content: ""; position: absolute; right: 4px; bottom: 2px; border: 2px solid #ccc; border-color: transparent #ccc #ccc transparent; }
.tools button.plain::after { content: none; }
.tools .active { background: #353535; border-color: #666; margin: 0 2px; }
.lit { color: #ddd; }
.colors { position: relative; height: 68px; }
.colors button, .colors svg { position: absolute; }
.colors .fg, .colors .bg { width: 31px; height: 31px; border: 1px solid #fff; outline: 1px solid #333; }
.colors .fg { left: 21px; top: 9px; background: #0f0a07; }
.colors .bg { left: 40px; top: 29px; background: #85585a; }
.swap { left: 61px; top: 9px; }
.deflt { left: 21px; top: 51px; }
.tools.modes { grid-template-rows: 1fr; height: 36px; }
.modes button svg { width: 22px; height: 20px; }

.document { flex: 1; min-width: 0; display: flex; flex-direction: column; margin-left: 1px; border: 1px solid #383838; border-width: 0 1px; }
.doctabs { height: 37px; flex: none; background: #424242; display: flex; color: #a0a0a0; border-bottom: 1px solid #383838; white-space: nowrap; }
.doctab { display: flex; align-items: center; gap: 8px; padding: 0 10px 0 12px; border-right: 1px solid #383838; }
.doctab.on { background: #535353; color: #f0f0f0; }
.view { flex: 1; min-height: 0; display: grid; grid-template: 21px 1fr / 21px 1fr 20px; background: #484848; }
.corner, .ruler { width: 100%; height: 100%; min-width: 0; min-height: 0; overflow: hidden; }
#ruler-v { width: 20px; }
.ruler path { stroke: #727272; fill: none; shape-rendering: crispEdges; }
.ruler text { font: 15px "Open Sans", sans-serif; fill: #a2a2a2; }
.canvas { background: #282828; position: relative; overflow: hidden; }
.page { position: absolute; left: 334px; top: 40px; width: 730px; height: 785px; }
.status { height: 21px; flex: none; display: flex; background: #484848; font-size: 14px; white-space: nowrap; }
.zoom { width: 60px; padding-left: 6px; font-size: 13px; color: #eee; background: #424242; }
.info { display: flex; align-items: center; gap: 18px; padding: 0 6px 0 12px; background: #505050; border-right: 1px solid #3c3c3c; }

.docks { width: 364px; flex: none; display: grid; grid-template: 16px 1fr / 48px 1fr; margin-left: 2px; border-left: 1px solid #383838; }
.docks-head { grid-column: 1 / 3; background: #424242; border-bottom: 1px solid #383838; display: flex; justify-content: space-between; padding: 4px 8px 0 32px; }
.icon-dock { border-right: 1px solid #383838; }
.icon-dock button { width: 100%; height: 51px; display: flex; flex-direction: column; align-items: center; justify-content: space-between; padding: 4px 0 10px; border-bottom: 1px solid #383838; }
.panels { margin-left: 1px; border-left: 1px solid #383838; display: flex; flex-direction: column; gap: 1px; min-height: 0; }
.panel { border-bottom: 1px solid #383838; }
.ptabs { display: flex; height: 36px; background: #424242; color: #a0a0a0; font-size: 14px; align-items: stretch; }
.ptabs a { width: 49px; text-align: center; line-height: 32px; border: 1px solid #383838; border-width: 0 1px 1px 0; }
.ptabs a.on { color: #f0f0f0; background: #535353; border-bottom: 0; }
.ptabs a.on:nth-child(5) { width: 73px; }
.ptabs svg { margin: 13px 6px 0 auto; }
.history { display: flex; height: 269px; padding-top: 9px; }
.history ol { list-style: none; margin: 0; padding: 0; flex: 1; display: flex; flex-direction: column; }
.history li { flex: 1; min-height: 0; border-top: 1px solid #434343; display: flex; align-items: center; padding: 0 0 2px 7px; line-height: 18px; }
.history li i { width: 16px; height: 16px; margin-top: 3px; border: 1px solid #6b6b6b; border-color: #474747 #6b6b6b #6b6b6b #474747; }
.history li svg { width: 20px; height: 20px; margin: 4px 14px 0 16px; }
.history li.on { background: #6a6a6a; color: #f0f0f0; }
.hscroll { width: 20px; margin-top: -4px; background: #4a4a4a; display: flex; flex-direction: column; align-items: center; padding: 9px 0; }
.hscroll .up { transform: rotate(180deg); }
.hscroll b { width: 14px; height: 38px; background: #6a6a6a; margin: auto 0 3px; }
.hfoot { height: 32px; border-top: 1px solid #3c3c3c; display: flex; align-items: center; justify-content: flex-end; gap: 22px; padding-right: 34px; }
.layers { flex: 1; display: flex; flex-direction: column; min-height: 0; border-top: 1px solid #383838; border-bottom: 0; }
.layers .ptabs { flex: none; }
.lrow { display: flex; align-items: center; flex: none; padding: 0 15px 0 4px; border-bottom: 1px solid #424242; white-space: nowrap; }
.filter { height: 42px; gap: 14px; padding-right: 13px; }
.kind { width: 106px; height: 26px; padding: 0 7px 0 10px; gap: 7px; margin-right: 7px; }
.filter .toggle { margin-left: auto; }
.blend { height: 34px; justify-content: space-between; }
.mode { width: 147px; height: 26px; padding: 0 3px 0 10px; }
.pct { width: 67px; height: 22px; font-size: 13px; padding: 0 3px; }
.lock { height: 39px; border: 0; padding-left: 7px; padding-bottom: 4px; justify-content: space-between; }
.lock-ics { display: flex; gap: 12px; }
.dim { color: #999; }
.layer-list { flex: 1; background: linear-gradient(90deg, #4d4d4d calc(100% - 20px), #4a4a4a 0); padding-right: 20px; }
.layer { display: flex; height: 51px; background: #535353; border-bottom: 1px solid #424242; }
.vis { width: 37px; display: grid; place-items: center; border-right: 1px solid #424242; }
.linfo { flex: 1; display: flex; align-items: center; gap: 8px; padding: 0 19px 0 2px; color: #eee; }
.layer.on .linfo { background: #6a6a6a; }
.padlock { margin-left: auto; }
.lfoot { height: 32px; flex: none; border-top: 1px solid #383838; display: flex; align-items: center; justify-content: flex-end; gap: 18px; padding-right: 34px; }
.fx { font: italic 18px/18px "Open Sans", sans-serif; width: 16px; }
.fx, .adj { position: relative; }
.fx svg, .adj svg + svg { position: absolute; right: -4px; bottom: -3px; }

.popup { position: absolute; left: 912px; top: 75px; width: 170px; margin: 0; padding: 2px; list-style: none; background: #f0f0f0; border: 1px solid #999; color: #000; box-shadow: 3px 3px 3px rgba(0, 0, 0, .55); }
.popup li { position: relative; height: 26px; display: flex; align-items: center; gap: 3px; padding: 0 0 2px 18px; white-space: nowrap; }
.popup .off { color: #6d6d6d; }
.popup .hot { background: #0078d7; color: #fff; }
.popup .tick { position: absolute; left: 4px; top: 8px; }
.popup .sep { height: 1px; margin: 5px 0; padding: 0; background: #bbb; }

.behind { display: flex; flex-direction: column; }
.b-top { height: 35px; background: #3498ff; }
.b-white { height: 83px; background: linear-gradient(#fff 42px, #ddd 42px, #ddd 43px, #fff 43px); border-bottom: 1px solid #ccc; }
.b-scroll { flex: 1; display: flex; flex-direction: column; padding: 7px 0; }
.b-scroll b { width: 9px; height: 150px; background: #c1c1c1; margin: auto 0 127px; }
.b-foot { height: 27px; background: #fff; }

.taskbar { grid-column: 1 / 3; position: relative; display: flex; background: #eee; color: #111; }
.taskbar button { display: grid; place-items: center; }
.start, .sys { width: 60px; }
.search { width: 430px; display: flex; align-items: center; gap: 13px; padding-left: 14px; background: #fff; border: 1px solid #ccc; }
.search input { flex: 1; font-size: 19px; line-height: 26px; }
.search input::placeholder { color: #222; opacity: 1; }
.apps { display: flex; margin-left: 3px; }
.apps button { width: 62px; position: relative; }
.apps button::after { content: ""; position: absolute; left: 6px; right: 5px; bottom: 0; height: 3px; background: #2b8acb; }
.apps .cur { background: #fafafa; }
.apps .cur::after { left: 0; right: 0; }
.set { color: #444; }
.qiy { font: 11px "Open Sans", sans-serif; fill: #fff; }
.tray { margin-left: auto; display: flex; align-items: center; padding-right: 17px; }
.tray > svg { margin-right: 10px; }
.tray .sg { margin: 0 21px 0 8px; }
.clock { width: 76px; text-align: center; font-size: 15px; line-height: 23px; margin-right: 24px; }
.tray .note { margin: 6px 0 0; }
.cnt { font: 15px "Open Sans", sans-serif; }
.taskbar::after { content: ""; position: absolute; right: 5px; top: 0; bottom: 0; width: 1px; background: #aaa; }
.mark { position: absolute; right: 14px; top: 14px; font-size: 20px; line-height: 28px; color: rgba(190, 190, 190, .75); text-shadow: 1px 1px 1px rgba(60, 60, 60, .7); }

.gauge { position: absolute; right: 447px; bottom: 58px; width: 84px; height: 84px; color: #333; text-align: center; }
.gauge svg { width: 84px; height: 84px; }
.g-num { position: absolute; left: 18px; top: 15px; font: 28px/34px "Open Sans", sans-serif; }
.g-num small { font-size: 15px; }
.g-temp { position: absolute; left: 34px; top: 51px; font-size: 11px; line-height: 16px; }
```
FILE: ruler.js
```js
// Ruler ticks and labels for a 78.46% zoom, ten ticks per 100 document pixels.
const step = 78.46;

function ticks(origin, end, size, draw) {
  let d = "";
  const first = Math.floor(-origin / step);
  for (let n = first * 10; origin + n * step / 10 < end; n++) {
    const p = Math.round(origin + n * step / 10);
    const len = n % 10 === 0 ? size : n % 5 === 0 ? 7 : 3;
    d += draw(p, len, n % 10 === 0 ? String(Math.abs(n * 10)) : null);
  }
  return d;
}

function render() {
  const h = document.getElementById("ruler-h");
  let labels = "";
  let path = ticks(334, h.clientWidth, 20, (p, len, label) => {
    if (label !== null && p > 0) labels += `<text x="${p + 2}" y="18">${label}</text>`;
    return `M${p}.5 20v-${len}`;
  });
  h.innerHTML = `<path d="${path}"/>${labels}`;

  const v = document.getElementById("ruler-v");
  labels = "";
  path = ticks(40, v.clientHeight, 20, (p, len, label) => {
    if (label !== null) {
      [...label].forEach((c, i) => {
        const y = p + 15 + i * 15;
        if (y > 0 && y < v.clientHeight + 8) labels += `<text x="1" y="${y}">${c}</text>`;
      });
    }
    return `M20 ${p}.5h-${len}`;
  });
  v.innerHTML = `<path d="${path}"/>${labels}`;
}

render();
addEventListener("resize", render);
```
